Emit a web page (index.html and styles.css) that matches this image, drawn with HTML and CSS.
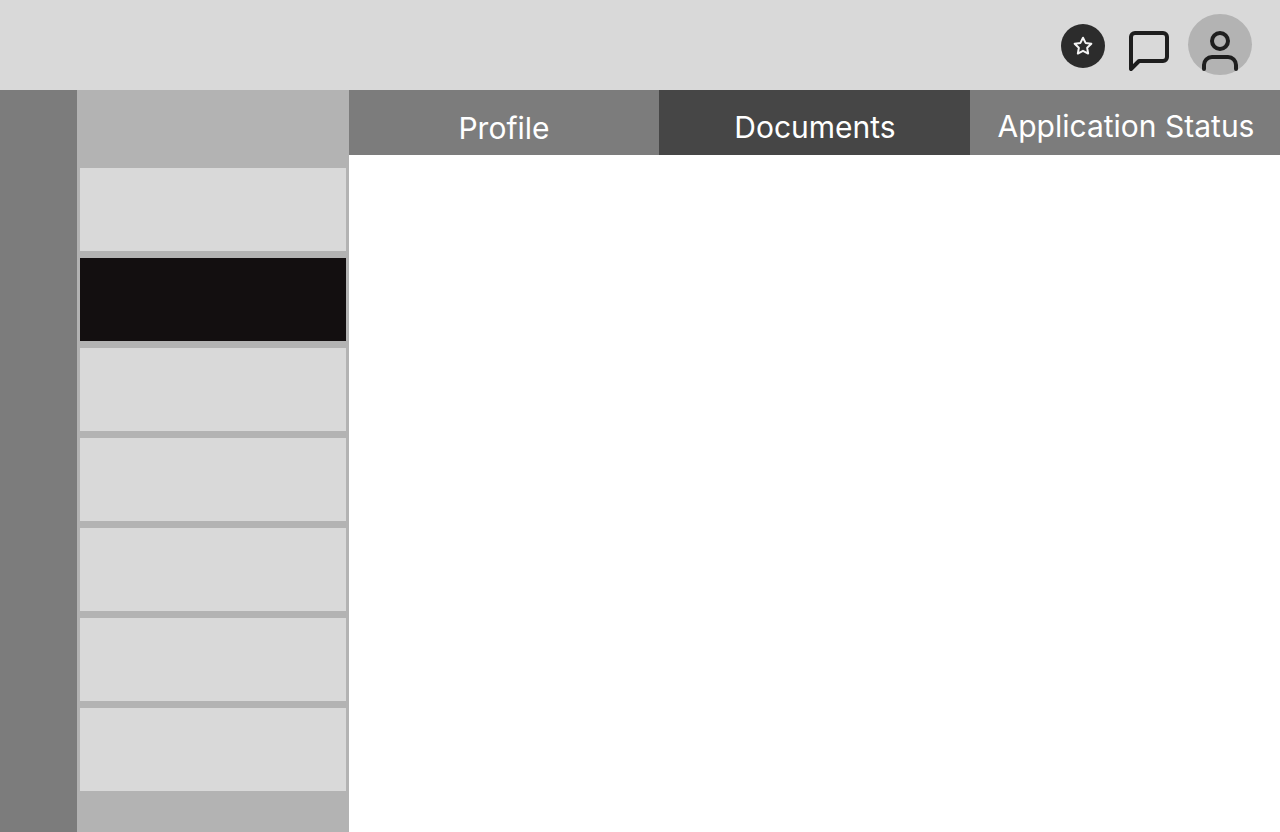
FILE: index.html
```html
<!DOCTYPE html>
<html lang="en">
<head>
<meta charset="utf-8">
<title>Documents</title>
<link rel="stylesheet" href="styles.css">
</head>
<body>
<div class="app">
  <header class="topbar">
    <button class="star" aria-label="Favorites">
      <svg width="20" height="20" viewBox="0 0 20 20" fill="none" stroke="#f5f5f5" stroke-width="2" stroke-linejoin="round"><path d="M10 1.7l2.57 5.2 5.76.85-4.16 4.06.98 5.73L10 14.84l-5.15 2.7.98-5.73L1.67 7.75l5.76-.85z"/></svg>
    </button>
    <svg class="chat" width="48" height="48" viewBox="0 0 48 48" fill="none" stroke="#1e1e1e" stroke-width="4" stroke-linecap="round" stroke-linejoin="round"><path d="M42 30a4 4 0 0 1-4 4H14l-8 8V10a4 4 0 0 1 4-4h28a4 4 0 0 1 4 4z"/></svg>
    <div class="avatar">
      <svg width="48" height="48" viewBox="0 0 48 48" fill="none" stroke="#1e1e1e" stroke-width="4" stroke-linecap="round" stroke-linejoin="round"><path d="M40 42v-4a8 8 0 0 0-8-8H16a8 8 0 0 0-8 8v4"/><circle cx="24" cy="14" r="8"/></svg>
    </div>
  </header>
  <div class="body">
    <div class="rail"></div>
    <nav class="sidebar">
      <div class="item"></div>
      <div class="item selected"></div>
      <div class="item"></div>
      <div class="item"></div>
      <div class="item"></div>
      <div class="item"></div>
      <div class="item"></div>
    </nav>
    <main class="content">
      <div class="tabs">
        <div class="tab profile">Profile</div>
        <div class="tab documents">Documents</div>
        <div class="tab status">Application Status</div>
      </div>
    </main>
  </div>
</div>
</body>
</html>
```
FILE: styles.css
```css
* { box-sizing: border-box; }
body { margin: 0; background: #fff; font-family: Inter, sans-serif; }
.app { display: flex; flex-direction: column; width: 1280px; height: 832px; overflow: hidden; }
.topbar { display: flex; justify-content: flex-end; height: 90px; padding-right: 28px; background: #d9d9d9; flex: none; }
.star { display: flex; align-items: center; justify-content: center; width: 44px; height: 44px; margin: 24px 20px 0 0; padding: 0; border: 0; border-radius: 50%; background: #2c2c2c; }
.chat { margin: 27px 15px 0 0; }
.avatar { width: 64px; height: 61px; margin-top: 14px; padding: 13px 0 0 8px; border-radius: 50%; background: #b3b3b3; }
.avatar svg { display: block; }
.body { display: flex; flex: 1; }
.rail { width: 77px; background: #7c7c7c; }
.sidebar { display: flex; flex-direction: column; gap: 7px; width: 272px; padding: 78px 3px 0; background: #b3b3b3; }
.item { height: 83px; background: #d9d9d9; }
.selected { background: #130f10; }
.content { flex: 1; background: #fff; }
.tabs { display: grid; grid-template-columns: 310px 311px 310px; height: 65px; }
.tab { background: #7c7c7c; color: #fff; font-size: 30px; font-weight: 400; line-height: 36px; text-align: center; white-space: nowrap; }
.profile { padding-top: 20px; }
.documents { padding-top: 19px; padding-left: 1px; background: #464646; }
.status { padding-top: 18px; padding-left: 2px; }
```
